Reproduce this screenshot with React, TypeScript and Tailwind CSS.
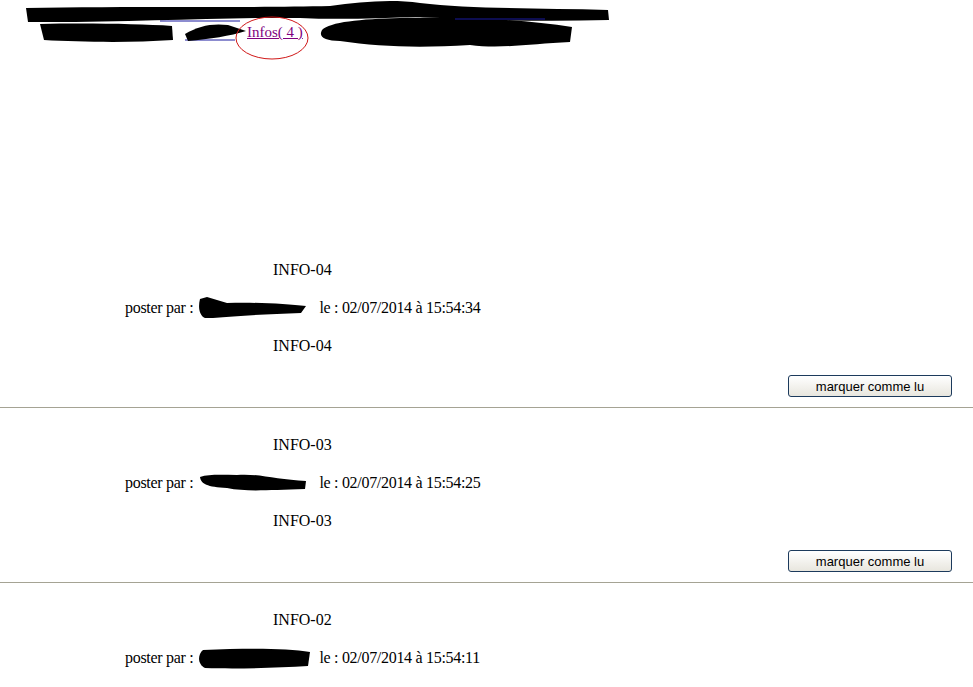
const serif = { fontFamily: '"Liberation Serif", "Times New Roman", serif' };

type Info = { title: string; date: string; blob: string };

const infos: Info[] = [
  {
    title: "INFO-04",
    date: "02/07/2014 à 15:54:34",
    blob: "M3 2 C1 10 2 18 8 21 L16 21 C40 19 70 17 104 16 L109 9 C90 7 60 5 30 6 L10 0 Z",
  },
  {
    title: "INFO-03",
    date: "02/07/2014 à 15:54:25",
    blob: "M3 5 C4 12 10 15 30 16 C50 20 70 18 108 17 L109 9 C80 8 60 1 40 3 C25 3 12 2 3 5 Z",
  },
  {
    title: "INFO-02",
    date: "02/07/2014 à 15:54:11",
    blob: "M6 3 C0 8 1 18 8 21 C40 22 80 21 111 19 L113 5 C90 1 50 1 6 3 Z",
  },
  {
    title: "INFO-01",
    date: "02/07/2014 à 15:53:58",
    blob: "M4 5 C2 12 6 18 12 19 C50 19 80 18 108 16 L110 6 C80 4 40 3 4 5 Z",
  },
];

function Redact({ d }: { d: string }) {
  return (
    <svg width="114" height="22" viewBox="0 0 114 22" className="shrink-0">
      <path d={d} fill="#000" />
    </svg>
  );
}

function Header() {
  return (
    <div className="relative h-[233px]">
      <div className="pt-[23px] pl-[247px] text-[15px] leading-[18px]">
        <a href="#" className="text-[#800080] underline">
          Infos( 4 )
        </a>
      </div>
      <svg
        width="620"
        height="65"
        viewBox="0 0 620 65"
        className="absolute left-0 top-0 pointer-events-none"
      >
        <line x1="160" y1="21" x2="240" y2="21" stroke="#1a1aa0" strokeWidth="1" />
        <line x1="185" y1="40" x2="235" y2="40" stroke="#1a1aa0" strokeWidth="1" />
        <path
          d="M26 8 C120 6 250 8 330 6 C360 2 390 -1 420 3 C470 9 540 8 608 10 L609 20 C540 22 470 20 420 17 C380 18 340 20 300 18 C220 17 120 23 28 22 Z"
          fill="#000"
        />
        <path d="M40 24 C90 23 140 24 172 26 L173 40 C130 43 80 42 44 40 Z" fill="#000" />
        <path d="M185 34 C198 26 212 23 228 25 L246 31 C230 36 210 39 188 41 Z" fill="#000" />
        <path
          d="M322 30 C330 22 360 19 400 18 C450 16 520 19 572 27 L570 42 C530 44 500 49 470 45 C420 48 380 47 340 41 C325 41 318 37 322 30 Z"
          fill="#000"
        />
        <line x1="455" y1="19" x2="545" y2="19" stroke="#1a1aa0" strokeWidth="1" />
        <ellipse cx="272" cy="38" rx="36" ry="21" fill="none" stroke="#d01818" strokeWidth="1" />
      </svg>
    </div>
  );
}

function Entry({ info }: { info: Info }) {
  return (
    <div>
      <div className="pt-[17px]">
        <div className="h-[38px] flex items-center pt-[2px] pl-[273px]">{info.title}</div>
        <div className="h-[38px] flex items-center pt-[2px] pl-[125px] tracking-[-0.3px]">
          <span>poster par :</span>
          <span className="ml-[4px]">
            <Redact d={info.blob} />
          </span>
          <span className="ml-[8px]">le : {info.date}</span>
        </div>
        <div className="h-[38px] flex items-center pt-[2px] pl-[273px]">{info.title}</div>
        <div className="flex justify-end pr-[21px] mt-[11px] mb-[10px]">
          <button
            className="w-[164px] h-[22px] rounded-[3px] border border-[#1c3a5c] bg-gradient-to-b from-white to-[#e8e6de] text-[13px] leading-none text-black"
            style={{ fontFamily: '"Liberation Sans", Arial, sans-serif' }}
          >
            marquer comme lu
          </button>
        </div>
      </div>
      <div className="border-t border-[#a5a394]" />
    </div>
  );
}

export default function App() {
  return (
    <div className="w-[973px] min-h-[687px] bg-white text-black text-[16px] leading-[18px]" style={serif}>
      <Header />
      {infos.map((info) => (
        <Entry key={info.title} info={info} />
      ))}
    </div>
  );
}
